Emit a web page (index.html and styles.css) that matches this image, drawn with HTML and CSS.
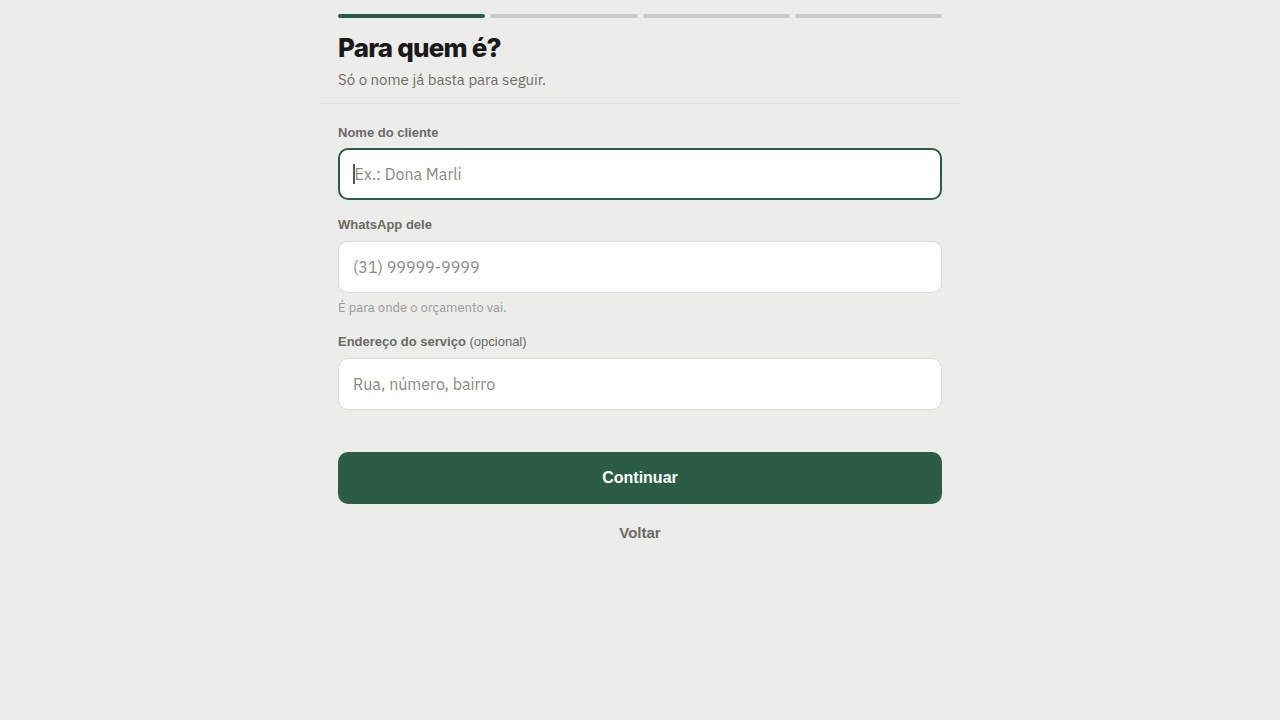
FILE: index.html
```html
<!DOCTYPE html>
<html lang="pt-BR">
<head>
<meta charset="utf-8">
<title>Para quem é?</title>
<link rel="stylesheet" href="styles.css">
</head>
<body>
<main class="page">
  <header class="header">
    <div class="progress">
      <span class="step active"></span>
      <span class="step"></span>
      <span class="step"></span>
      <span class="step"></span>
    </div>
    <h1 class="title">Para quem é?</h1>
    <p class="subtitle">Só o nome já basta para seguir.</p>
  </header>
  <form class="form">
    <div class="field">
      <label class="label" for="nome">Nome do cliente</label>
      <div class="input focused"><span class="caret"></span><span class="ph">Ex.: Dona Marli</span></div>
    </div>
    <div class="field">
      <label class="label" for="zap">WhatsApp dele</label>
      <div class="input"><span class="ph">(31) 99999-9999</span></div>
      <p class="hint">É para onde o orçamento vai.</p>
    </div>
    <div class="field">
      <label class="label" for="end">Endereço do serviço <span class="opt">(opcional)</span></label>
      <div class="input"><span class="ph">Rua, número, bairro</span></div>
    </div>
    <button type="button" class="primary">Continuar</button>
    <button type="button" class="link">Voltar</button>
  </form>
</main>
</body>
</html>
```
FILE: styles.css
```css
html, body {
  margin: 0;
  padding: 0;
  background: #ececea;
}
body {
  font-family: "IBM Plex Sans", "Noto Sans", sans-serif;
  color: #1c1c1a;
}
.page {
  width: 640px;
  margin: 0 auto;
}
.header {
  padding: 14px 18px 12px;
  border-bottom: 1px solid #dededb;
}
.progress {
  display: flex;
  gap: 5px;
}
.step {
  flex: 1;
  height: 4px;
  border-radius: 2px;
  background: #c9c9c6;
}
.step.active {
  background: #2b5c46;
}
.title {
  margin: 14px 0 0;
  font-family: "Inter", "Liberation Sans", sans-serif;
  font-weight: 800;
  font-size: 26px;
  line-height: 32px;
  letter-spacing: -0.8px;
  color: #1a1a18;
}
.subtitle {
  margin: 5px 0 0;
  font-size: 15px;
  line-height: 22px;
  color: #6e6e6b;
}
.form {
  padding: 20px 18px 0;
  display: flex;
  flex-direction: column;
}
.field {
  display: flex;
  flex-direction: column;
  margin-bottom: 16px;
}
.field:nth-child(2) {
  margin-bottom: 17px;
}
.field:nth-child(3) {
  margin-bottom: 42px;
}
.label {
  font-family: "Liberation Sans", Arial, sans-serif;
  font-weight: 700;
  font-size: 13px;
  line-height: 18px;
  color: #6a6a67;
  margin-bottom: 7px;
}
.field:first-child .label {
  margin-bottom: 6px;
}
.opt {
  font-weight: 400;
}
.input {
  box-sizing: border-box;
  height: 52px;
  background: #ffffff;
  border: 1.5px solid #dadad7;
  border-radius: 10px;
  display: flex;
  align-items: center;
  padding-left: 14px;
  font-size: 16px;
}
.input.focused {
  border: 2px solid #2b5c46;
  padding-left: 13px;
}
.caret {
  width: 1.5px;
  height: 20px;
  background: #555;
}
.ph {
  color: #8a8a87;
}
.hint {
  margin: 6px 0 0;
  font-size: 13px;
  line-height: 17px;
  color: #9a9a97;
}
.primary {
  height: 52px;
  border: none;
  border-radius: 10px;
  background: #2b5c46;
  color: #ffffff;
  font-family: "Liberation Sans", Arial, sans-serif;
  font-weight: 700;
  font-size: 16px;
  cursor: pointer;
}
.link {
  margin-top: 19px;
  border: none;
  background: transparent;
  padding: 0;
  font-family: "Liberation Sans", Arial, sans-serif;
  font-weight: 700;
  font-size: 15px;
  line-height: 20px;
  color: #6a6a67;
  cursor: pointer;
}
```
